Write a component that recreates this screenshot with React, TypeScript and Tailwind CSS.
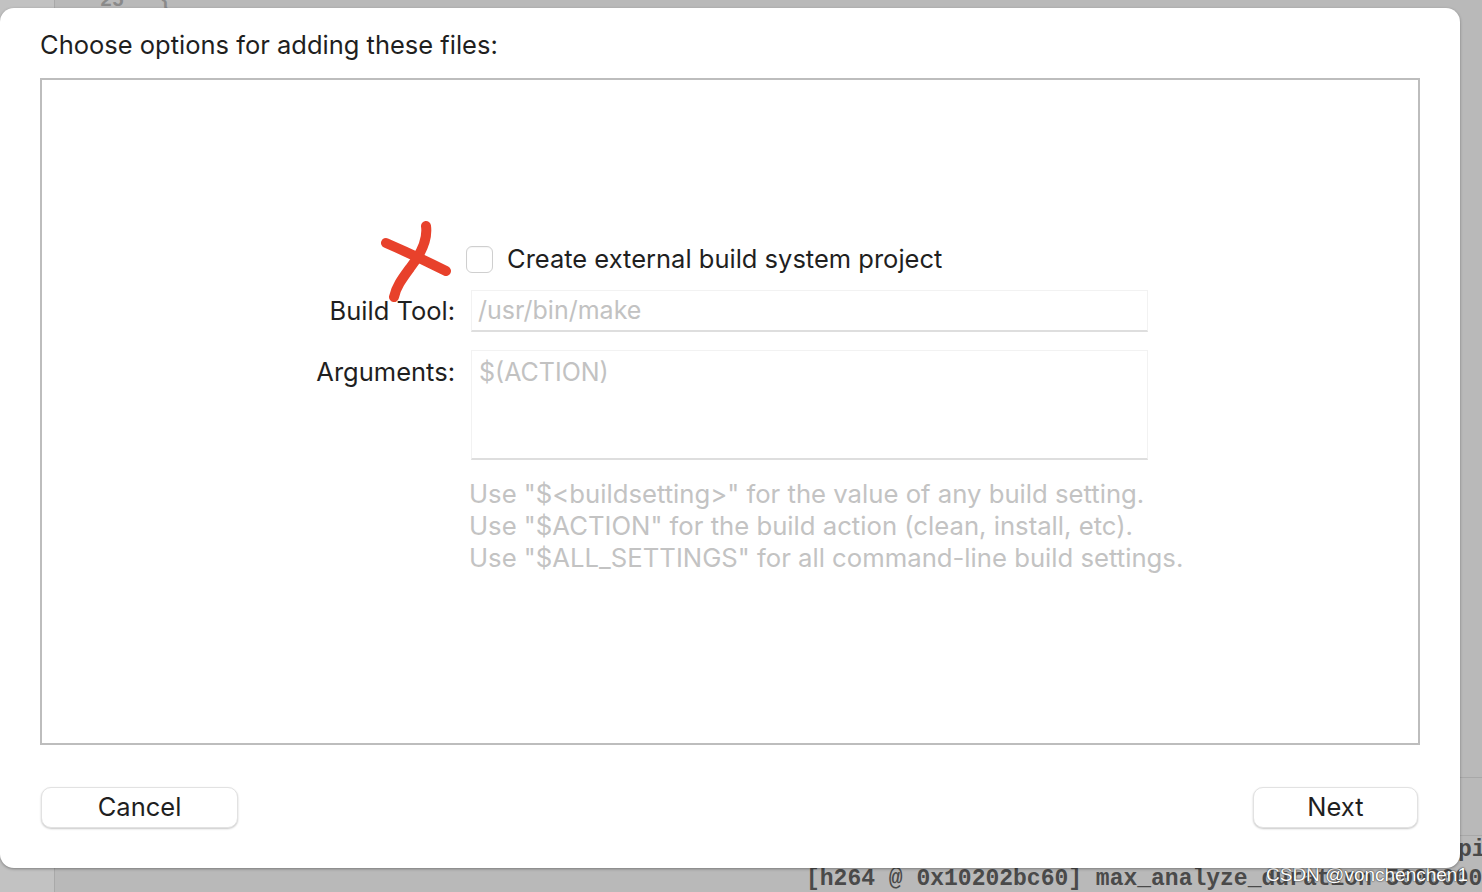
import React from "react";

const sans = { fontFamily: "Inter, 'Noto Sans', sans-serif" };

function RedCross() {
	// hand-drawn annotation lying over the form
	return (
		<svg className="absolute left-[370px] top-[215px] pointer-events-none" width="95" height="95" viewBox="370 215 95 95">
			<path d="M386 243 Q416 256 446 271" stroke="#e8412b" strokeWidth="10" strokeLinecap="round" fill="none" />
			<path d="M426 226 C428 240 421 254 410 268 C402 279 396 287 394 297" stroke="#e8412b" strokeWidth="10" strokeLinecap="round" fill="none" />
		</svg>
	);
}

export default function App() {
	return (
		<div className="relative w-[1482px] h-[892px] overflow-hidden bg-[#b9b9b9]" style={sans}>
			{/* window behind the sheet */}
			<div className="absolute left-0 top-0 bottom-0 w-[55px] bg-[#c2c2c2] border-r border-[#a9a9a9]" />
			<div className="absolute left-[100px] top-[-14px] text-[20px] text-[#8a8a8a] font-bold" style={{ fontFamily: "'Liberation Mono', monospace" }}>
				25 &nbsp;&nbsp;&#123;
			</div>
			<div className="absolute right-0 top-[777px] w-[30px] border-t border-[#a8a8a8]" />
			<div className="absolute right-0 top-[835px] w-[30px] border-t border-[#a8a8a8]" />
			<div className="absolute left-[1458px] top-[835px] text-[23px] font-bold text-[#4a4a4a] leading-[30px]" style={{ fontFamily: "'Liberation Mono', monospace" }}>
				pi
			</div>
			<div className="absolute left-[806px] top-[864px] text-[23px] font-bold text-[#4a4a4a] leading-[30px] whitespace-nowrap" style={{ fontFamily: "'Liberation Mono', monospace" }}>
				[h264 @ 0x10202bc60] max_analyze_duration 5000000
			</div>
			<div className="absolute left-[1266px] top-[862px] text-[19px] text-white leading-[26px] whitespace-nowrap [text-shadow:0_0_2px_#333,0_0_1px_#333]" style={{ fontFamily: "'Liberation Sans', sans-serif" }}>
				CSDN @vonchenchen1
			</div>

			{/* sheet */}
			<div className="relative mt-[8px] w-[1460px] h-[860px] bg-white rounded-[14px] shadow-[0_1px_3px_rgba(0,0,0,0.35)] flex flex-col">
				<div className="pt-[21px] pl-[40px] text-[25.5px] leading-[32px] text-[#1f1f1f]">Choose options for adding these files:</div>

				<div className="mt-[17px] ml-[40px] w-[1380px] h-[667px] border-2 border-[#bdbdbd] flex flex-col">
					<div className="pt-[163px] pl-[424px] flex items-center gap-[14px]">
						<div className="w-[27px] h-[27px] rounded-[6px] border border-[#cfcfcf] bg-white shadow-[inset_0_1px_1px_rgba(0,0,0,0.04)]" />
						<span className="text-[25.5px] leading-[32px] text-[#1f1f1f]">Create external build system project</span>
					</div>

					<div className="mt-[15px] flex items-center">
						<div className="w-[413px] text-right text-[25.5px] leading-[32px] text-[#1f1f1f]">Build Tool:</div>
						<div className="ml-[16px] w-[677px] h-[42px] bg-white border border-[#f2f2f2] border-b-2 border-b-[#dedede] flex items-center pl-[6px] text-[25px] text-[#c2c2c2]">
							/usr/bin/make
						</div>
					</div>

					<div className="mt-[18px] flex items-start">
						<div className="w-[413px] pt-[6px] text-right text-[25.5px] leading-[32px] text-[#1f1f1f]">Arguments:</div>
						<div className="ml-[16px] w-[677px] h-[110px] bg-white border border-[#f2f2f2] border-b-2 border-b-[#dedede] pt-[5px] pl-[7px] text-[25px] leading-[32px] text-[#c2c2c2]">
							$(ACTION)
						</div>
					</div>

					<div className="mt-[18px] pl-[427px] text-[25.7px] leading-[32px] text-[#c3c3c3]">
						<div>Use "$&lt;buildsetting&gt;" for the value of any build setting.</div>
						<div>Use "$ACTION" for the build action (clean, install, etc).</div>
						<div>Use "$ALL_SETTINGS" for all command-line build settings.</div>
					</div>
				</div>

				<div className="mt-[42px] px-[41px] pr-[42px] flex justify-between">
					<button className="w-[197px] h-[41px] rounded-[10px] bg-white border border-[#e2e2e2] shadow-[0_1px_2px_rgba(0,0,0,0.22)] text-[25.5px] text-[#1f1f1f]">Cancel</button>
					<button className="w-[165px] h-[41px] rounded-[10px] bg-white border border-[#e2e2e2] shadow-[0_1px_2px_rgba(0,0,0,0.22)] text-[25.5px] text-[#1f1f1f]">Next</button>
				</div>
			</div>

			<RedCross />
		</div>
	);
}
